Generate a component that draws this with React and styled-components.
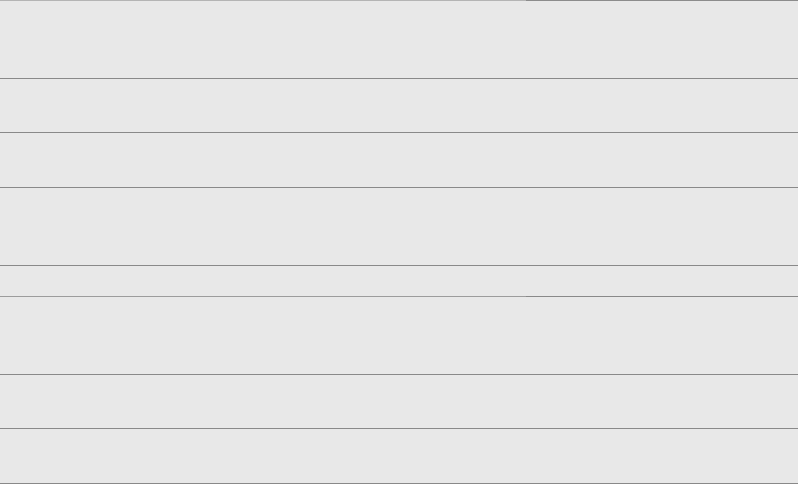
import React from "react";
import styled, { createGlobalStyle } from "styled-components";

const Global = createGlobalStyle`
  html, body {
    margin: 0;
    padding: 0;
    background: #e8e8e8;
    font-family: "Liberation Sans", Arial, sans-serif;
  }
`;

const Page = styled.div`
  width: 798px;
  height: 484px;
  background: #e8e8e8;
  overflow: hidden;
`;

const Group = styled.div`
  display: flex;
  flex-direction: column;
`;

const Edge = styled.div`
  display: grid;
  grid-template-columns: 526px 1fr;
  height: 1px;
`;

const EdgePart = styled.div`
  background: ${(p) => p.$tone};
`;

const Row = styled.div`
  height: ${(p) => p.$h - 1}px;
  border-bottom: 1px solid #898989;
`;

const Spacer = styled.div`
  height: 30px;
`;

const rowsA = [78, 54, 55, 78];
const rowsB = [78, 54, 55];

const App = () => (
  <Page>
    <Global />
    <Group>
      <Edge>
        <EdgePart $tone="#b4b4b4" />
        <EdgePart $tone="#8c8c8c" />
      </Edge>
      {rowsA.map((h, i) => (
        <Row key={i} $h={h} />
      ))}
    </Group>
    <Spacer />
    <Group>
      <Edge>
        <EdgePart $tone="#9c9c9c" />
        <EdgePart $tone="#898989" />
      </Edge>
      {rowsB.map((h, i) => (
        <Row key={i} $h={h} />
      ))}
    </Group>
  </Page>
);

export default App;
